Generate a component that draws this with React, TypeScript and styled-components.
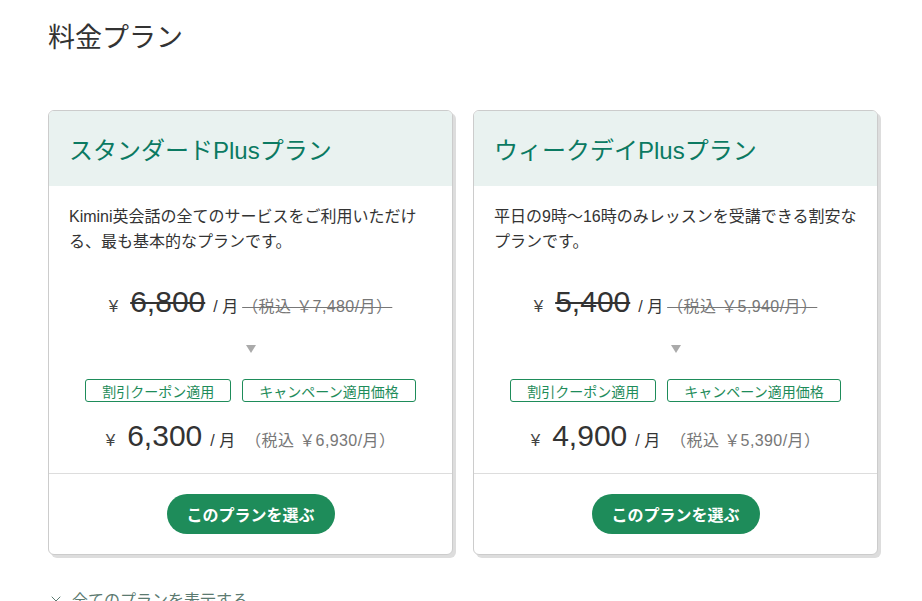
import React from 'react';
import styled, { createGlobalStyle } from 'styled-components';
import { ChevronDown } from 'lucide-react';

const GlobalStyle = createGlobalStyle`
  body {
    margin: 0;
    background: #ffffff;
    font-family: "Liberation Sans", "Noto Sans CJK JP", sans-serif;
    color: #333333;
  }
`;

const Page = styled.div`
  padding: 18px 48px 0;
  height: 601px;
  box-sizing: border-box;
  overflow: hidden;
`;

const PageTitle = styled.h1`
  margin: 0;
  font-size: 27px;
  line-height: 40px;
  font-weight: normal;
  color: #333333;
`;

const CardRow = styled.div`
  display: flex;
  gap: 20px;
  margin-top: 52px;
`;

const Card = styled.div`
  flex-shrink: 0;
  width: 405px;
  box-sizing: border-box;
  border: 1px solid #cccccc;
  border-radius: 6px;
  box-shadow: 3px 3px 0 #dddddd;
  background: #ffffff;
  overflow: hidden;
`;

const CardHeader = styled.div`
  height: 75px;
  display: flex;
  align-items: center;
  padding: 0 20px;
  background: #e9f2f0;
`;

const PlanName = styled.h2`
  margin: 0;
  font-size: 24px;
  font-weight: normal;
  color: #0b7a62;
`;

const CardBody = styled.div`
  padding: 18px 10px 17px 20px;
  border-bottom: 1px solid #dddddd;
`;

const Description = styled.p`
  margin: 0;
  font-size: 16px;
  line-height: 25px;
  color: #333333;
`;

const PriceRow = styled.div<{ $top: number }>`
  display: flex;
  justify-content: center;
  align-items: baseline;
  height: 40px;
  line-height: 40px;
  margin-top: ${p => p.$top}px;
  padding-right: 10px;
  white-space: nowrap;
`;

const Yen = styled.span`
  font-size: 17px;
  margin-right: 12px;
  color: #444444;
`;

const Amount = styled.span<{ $struck?: boolean }>`
  font-size: 30px;
  color: #333333;
  text-decoration: ${p => (p.$struck ? 'line-through' : 'none')};
  text-decoration-thickness: 2px;
`;

const PerMonth = styled.span`
  font-size: 16px;
  margin-left: 8px;
  color: #333333;
`;

const TaxNote = styled.span<{ $struck?: boolean }>`
  font-size: 16px;
  letter-spacing: 0.4px;
  margin-left: ${p => (p.$struck ? 4 : 10)}px;
  color: #777777;
  text-decoration: ${p => (p.$struck ? 'line-through' : 'none')};
`;

const Arrow = styled.div`
  margin-top: 21px;
  height: 12px;
  display: flex;
  justify-content: center;
  padding-right: 10px;
`;

const Triangle = styled.div`
  width: 0;
  height: 0;
  border-left: 5px solid transparent;
  border-right: 5px solid transparent;
  border-top: 8px solid #aaaaaa;
  margin-top: 2px;
`;

const TagRow = styled.div`
  display: flex;
  justify-content: center;
  gap: 11px;
  margin-top: 24px;
  padding-right: 10px;
`;

const Tag = styled.span`
  display: inline-flex;
  align-items: center;
  height: 21px;
  padding: 0 16px;
  border: 1px solid #1e8c5a;
  border-radius: 3px;
  font-size: 14px;
  color: #1e8c5a;
  white-space: nowrap;
`;

const CardFooter = styled.div`
  display: flex;
  justify-content: center;
  padding: 20px 0;
`;

const SelectButton = styled.button`
  width: 168px;
  height: 40px;
  border: none;
  border-radius: 20px;
  background: #1e8c5a;
  color: #ffffff;
  font-family: "Liberation Sans", "Noto Sans CJK JP", sans-serif;
  font-size: 16px;
  font-weight: bold;
  cursor: pointer;
`;

const ShowAll = styled.div`
  display: flex;
  align-items: center;
  gap: 8px;
  margin-top: 32px;
  font-size: 16px;
  color: #5b7a70;
`;

interface Plan {
  name: string;
  description: string;
  oldPrice: string;
  oldTax: string;
  price: string;
  tax: string;
}

const plans: Plan[] = [
  {
    name: 'スタンダードPlusプラン',
    description: 'Kimini英会話の全てのサービスをご利用いただける、最も基本的なプランです。',
    oldPrice: '6,800',
    oldTax: '（税込 ￥7,480/月）',
    price: '6,300',
    tax: '（税込 ￥6,930/月）',
  },
  {
    name: 'ウィークデイPlusプラン',
    description: '平日の9時〜16時のみレッスンを受講できる割安なプランです。',
    oldPrice: '5,400',
    oldTax: '（税込 ￥5,940/月）',
    price: '4,900',
    tax: '（税込 ￥5,390/月）',
  },
];

const PlanCard: React.FC<{ plan: Plan }> = ({ plan }) => (
  <Card>
    <CardHeader>
      <PlanName>{plan.name}</PlanName>
    </CardHeader>
    <CardBody>
      <Description>{plan.description}</Description>
      <PriceRow $top={28}>
        <Yen>¥</Yen>
        <Amount $struck>{plan.oldPrice}</Amount>
        <PerMonth>/ 月</PerMonth>
        <TaxNote $struck>{plan.oldTax}</TaxNote>
      </PriceRow>
      <Arrow>
        <Triangle />
      </Arrow>
      <TagRow>
        <Tag>割引クーポン適用</Tag>
        <Tag>キャンペーン適用価格</Tag>
      </TagRow>
      <PriceRow $top={14}>
        <Yen>¥</Yen>
        <Amount>{plan.price}</Amount>
        <PerMonth>/ 月</PerMonth>
        <TaxNote>{plan.tax}</TaxNote>
      </PriceRow>
    </CardBody>
    <CardFooter>
      <SelectButton>このプランを選ぶ</SelectButton>
    </CardFooter>
  </Card>
);

export default function App() {
  return (
    <>
      <GlobalStyle />
      <Page>
        <PageTitle>料金プラン</PageTitle>
        <CardRow>
          {plans.map(plan => (
            <PlanCard key={plan.name} plan={plan} />
          ))}
        </CardRow>
        <ShowAll>
          <ChevronDown size={16} strokeWidth={1.5} />
          全てのプランを表示する
        </ShowAll>
      </Page>
    </>
  );
}
